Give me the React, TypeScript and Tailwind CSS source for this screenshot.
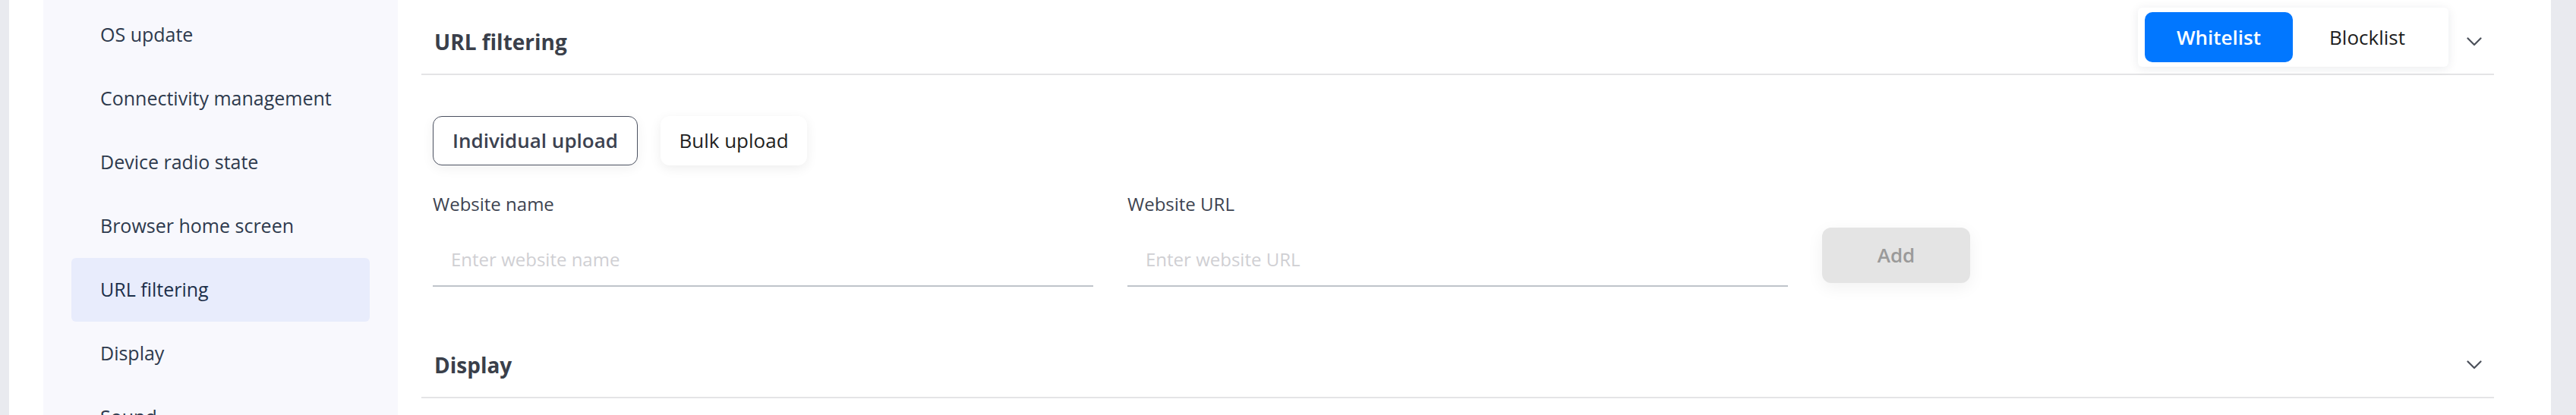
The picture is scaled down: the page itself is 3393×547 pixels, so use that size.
import React, { useState } from 'react';

const NAV_ITEMS = [
	'OS update',
	'Connectivity management',
	'Device radio state',
	'Browser home screen',
	'URL filtering',
	'Display',
	'Sound',
];

const Chevron = () => (
	<svg width="20" height="12" viewBox="0 0 20 12" fill="none" className="shrink-0">
		<path d="M1.5 1.5 L10 10 L18.5 1.5" stroke="#4b505a" strokeWidth="2.2" strokeLinecap="round" strokeLinejoin="round" />
	</svg>
);

const Sidebar = ({ active }: { active: string }) => (
	<div className="flex w-[467px] shrink-0 flex-col bg-[#f8f8fd] px-[37px] pt-[4px]">
		{NAV_ITEMS.map((item) => (
			<div
				key={item}
				className={
					item === active
						? 'flex h-[84px] shrink-0 items-center rounded-[6px] bg-[#e8ecfc] pl-[38px] text-[25px] text-[#1c2f4a]'
						: 'flex h-[84px] shrink-0 items-center rounded-[6px] pl-[38px] text-[25px] text-[#2e3a4d]'
				}
			>
				{item}
			</div>
		))}
	</div>
);

const ListToggle = () => {
	const [mode, setMode] = useState<'white' | 'block'>('white');

	return (
		<div className="mb-[12px] flex rounded-[6px] bg-white px-[9px] py-[6px] shadow-[0_2px_14px_rgba(20,30,60,0.09)]">
			<button
				onClick={() => setMode('white')}
				className={
					mode === 'white'
						? 'h-[66px] w-[195px] rounded-[10px] bg-[#0177ff] text-[26px] font-semibold text-white'
						: 'h-[66px] w-[195px] rounded-[10px] text-[26px] text-[#1d1d1d]'
				}
			>
				Whitelist
			</button>
			<button
				onClick={() => setMode('block')}
				className={
					mode === 'block'
						? 'h-[66px] w-[196px] rounded-[10px] bg-[#0177ff] text-[26px] font-semibold text-white'
						: 'h-[66px] w-[196px] rounded-[10px] text-[26px] text-[#1d1d1d]'
				}
			>
				Blocklist
			</button>
		</div>
	);
};

const Field = ({ label, placeholder }: { label: string; placeholder: string }) => (
	<div className="flex w-[870px] flex-col gap-[22px]">
		<label className="h-[30px] text-[24px] leading-[30px] text-[#3d4350]">{label}</label>
		<input
			placeholder={placeholder}
			className="h-[72px] border-b-2 border-[#bfc4ca] px-[24px] text-[24px] text-[#333] outline-none placeholder:text-[#cfcfd3]"
		/>
	</div>
);

const App = () => {
	return (
		<div className="flex h-[547px] w-full overflow-hidden bg-white font-['Open_Sans','Noto_Sans',sans-serif]">
			<div className="w-[12px] shrink-0 bg-[#e9eaef]" />
			<div className="w-[45px] shrink-0 bg-white" />
			<Sidebar active="URL filtering" />

			<main className="flex min-w-0 flex-1 flex-col bg-white pl-[31px] pr-[75px] pt-[13px]">
				{/* URL filtering section */}
				<section className="flex flex-col">
					<div className="flex h-[86px] items-center justify-between border-b-2 border-[#e4e4e6] pl-[17px] pr-[16px]">
						<h2 className="text-[28px] font-bold text-[#3a3f4a]">URL filtering</h2>
						<div className="flex items-center gap-[24px]">
							<ListToggle />
							<Chevron />
						</div>
					</div>

					<div className="flex flex-col pb-[61px] pl-[15px] pt-[54px]">
						<div className="flex gap-[30px]">
							<button className="h-[65px] w-[270px] rounded-[12px] border-[1.5px] border-[#4b5160] bg-white text-[26px] font-semibold text-[#3c4250] shadow-[0_4px_16px_rgba(0,0,0,0.06)]">
								Individual upload
							</button>
							<button className="h-[65px] w-[193px] rounded-[12px] bg-white text-[26px] text-[#1f1f1f] shadow-[0_4px_16px_rgba(0,0,0,0.07)]">
								Bulk upload
							</button>
						</div>

						<div className="mt-[36px] flex gap-[45px]">
							<Field label="Website name" placeholder="Enter website name" />
							<Field label="Website URL" placeholder="Enter website URL" />
							<button className="mb-[5px] h-[73px] w-[195px] self-end rounded-[12px] bg-[#e4e4e4] text-[26px] font-semibold text-[#9a9a9a] shadow-[0_6px_22px_rgba(0,0,0,0.06)]">
								Add
							</button>
						</div>
					</div>
				</section>

				{/* Display section */}
				<section className="flex flex-col">
					<div className="flex h-[86px] items-center justify-between border-b-2 border-[#e4e4e6] pl-[17px] pr-[16px]">
						<h2 className="text-[28px] font-bold text-[#3a3f4a]">Display</h2>
						<Chevron />
					</div>
				</section>
			</main>

			<div className="w-[33px] shrink-0 bg-[#e9eaef]" />
		</div>
	);
};

export default App;
